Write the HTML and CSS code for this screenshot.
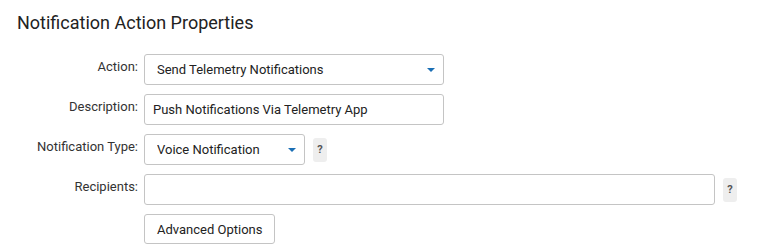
FILE: index.html
```html
<!DOCTYPE html>
<html>

<head>
    <title>Notification Action Properties</title>
    <link rel="stylesheet" href="styles.css">
</head>

<body>
    <div class="panel">
        <h2 class="panel-title">Notification Action Properties</h2>

        <div class="form-row">
            <label for="action">Action:</label>
            <div class="select-wrap wide">
                <select id="action">
                    <option>Send Telemetry Notifications</option>
                </select>
            </div>
        </div>

        <div class="form-row">
            <label for="description">Description:</label>
            <input type="text" id="description" class="wide" value="Push Notifications Via Telemetry App">
        </div>

        <div class="form-row">
            <label for="notifType">Notification Type:</label>
            <div class="select-wrap narrow">
                <select id="notifType">
                    <option>Voice Notification</option>
                </select>
            </div>
            <span class="help">?</span>
        </div>

        <div class="form-row">
            <label for="recipients">Recipients:</label>
            <input type="text" id="recipients" class="full">
            <span class="help">?</span>
        </div>

        <div class="form-row">
            <span class="spacer"></span>
            <button>Advanced Options</button>
        </div>
    </div>
</body>

</html>
```

FILE: styles.css
```css
body {
    font-family: Roboto, 'Liberation Sans', sans-serif;
    background: #ffffff;
    color: #222;
    margin: 0;
    padding: 0;
}

.panel {
    padding: 9px 17px 0 17px;
}

.panel-title {
    font-size: 18px;
    font-weight: 400;
    color: #222;
    margin: 0 0 17px 0;
    line-height: 28px;
}

.form-row {
    display: flex;
    align-items: center;
    gap: 6px;
    margin-bottom: 9px;
}

.form-row label,
.spacer {
    flex: 0 0 121px;
    text-align: right;
    font-size: 13px;
    color: #333;
    align-self: flex-start;
    padding-top: 5px;
}

input[type="text"],
select,
button {
    font-family: inherit;
    font-size: 13px;
    color: #222;
    background: #fff;
    border: 1px solid #c4c4c4;
    border-radius: 3px;
    height: 31px;
    box-sizing: border-box;
}

input[type="text"] {
    padding: 0 8px;
}

.wide {
    width: 300px;
}

.full {
    width: 571px;
}

.narrow {
    width: 161px;
}

.select-wrap {
    position: relative;
}

.select-wrap select {
    appearance: none;
    -webkit-appearance: none;
    width: 100%;
    padding: 0 12px;
}

.select-wrap::after {
    content: "";
    position: absolute;
    right: 9px;
    top: 14px;
    border-left: 4px solid transparent;
    border-right: 4px solid transparent;
    border-top: 4px solid #1a6fb5;
    pointer-events: none;
}

.help {
    display: inline-block;
    width: 14px;
    height: 24px;
    line-height: 24px;
    margin-left: 2px;
    background: #eeeeee;
    border-radius: 3px;
    text-align: center;
    font-size: 11px;
    font-weight: bold;
    color: #555;
}

button {
    padding: 0 12px;
    height: 30px;
    cursor: pointer;
}
```
